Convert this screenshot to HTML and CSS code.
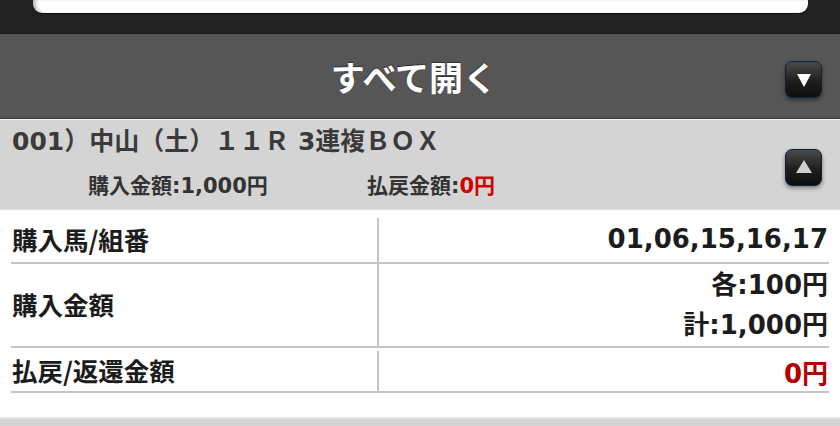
FILE: index.html
```html
<!DOCTYPE html>
<html lang="ja">
<head>
<meta charset="utf-8">
<title>購入履歴</title>
<link rel="stylesheet" href="styles.css">
</head>
<body>
<div class="top">
  <div class="search"></div>
</div>
<div class="openall">
  <span class="spacer"></span>
  <span class="openall-label">すべて開く</span>
  <span class="tbtn tbtn-down"><span class="tri tri-down"></span></span>
</div>
<div class="entry-head">
  <div class="entry-info">
    <div class="entry-title">001）中山（土）１１Ｒ 3連複ＢＯＸ</div>
    <div class="entry-sub">
      <span>購入金額:1,000円</span>
      <span>払戻金額:<em class="red">0円</em></span>
    </div>
  </div>
  <span class="tbtn tbtn-up"><span class="tri tri-up"></span></span>
</div>
<div class="detail">
  <div class="row row-1">
    <div class="cell-label">購入馬/組番</div>
    <div class="cell-value">01,06,15,16,17</div>
  </div>
  <div class="row row-2">
    <div class="cell-label">購入金額</div>
    <div class="cell-value cell-multi"><span>各:100円</span><span>計:1,000円</span></div>
  </div>
  <div class="row row-3">
    <div class="cell-label">払戻/返還金額</div>
    <div class="cell-value dark-red">0円</div>
  </div>
</div>
<div class="entry-head next"></div>
</body>
</html>
```
FILE: styles.css
```css
* { box-sizing: border-box; }
html, body { margin: 0; padding: 0; }
body {
  width: 840px;
  height: 426px;
  overflow: hidden;
  background: #fff;
  font-family: "DejaVu Sans", "Noto Sans CJK JP", sans-serif;
  font-weight: bold;
}
.top {
  height: 33px;
  background: #222;
  padding: 0 32px 0 33px;
}
.search {
  height: 13px;
  background: #fff;
  border-radius: 0 0 9px 9px;
  box-shadow: inset 4px 0 4px -2px rgba(0,0,0,0.35), 0 1px 0 #0c0c0c;
}
.openall {
  height: 86px;
  background: #565656;
  border-top: 1px solid #1c1c1c;
  border-bottom: 1px solid #3a3a3a;
  display: grid;
  grid-template-columns: 1fr auto 1fr;
  align-items: center;
  padding: 0 18px 0 0;
}
.openall-label {
  font-family: "Noto Sans CJK JP", sans-serif;
  font-size: 34px;
  color: #fff;
  line-height: 40px;
  text-shadow: 0 -1px 1px rgba(0,0,0,0.45);
  padding-top: 2px;
  padding-left: 6px;
}
.tbtn {
  width: 37px;
  height: 37px;
  border-radius: 7px;
  background: linear-gradient(#4a4a4a, #1e1e1e 55%, #0e0e0e);
  border: 1px solid #0f2238;
  box-shadow: 0 2px 4px rgba(0,0,0,0.45);
  display: flex;
  align-items: center;
  justify-content: center;
  justify-self: end;
}
.tbtn-down { margin-top: 6px; }
.tri { width: 0; height: 0; }
.tri-down {
  border-left: 7px solid transparent;
  border-right: 7px solid transparent;
  border-top: 13px solid #fff;
  margin-top: 2px;
}
.tri-up {
  border-left: 8px solid transparent;
  border-right: 8px solid transparent;
  border-bottom: 13px solid #cfcfcf;
  margin-top: -2px;
}
.entry-head {
  background: #d4d4d4;
  border-top: 1px solid #f2f2f2;
  border-bottom: 1px solid #dcdcdc;
  height: 91px;
  padding: 7px 18px 8px 12px;
  display: flex;
  align-items: center;
  justify-content: space-between;
}
.entry-info { align-self: flex-start; }
.entry-title {
  font-size: 25px;
  line-height: 30px;
  color: #3a3a3a;
  white-space: nowrap;
}
.entry-sub {
  margin-top: 14px;
  font-size: 21px;
  line-height: 30px;
  color: #333;
  padding-left: 76px;
  display: grid;
  grid-template-columns: 279px auto;
  white-space: nowrap;
}
.red { font-style: normal; color: #d40000; }
.tbtn-up { margin-top: 7px; }
.detail {
  padding: 8px 11px 24px 11px;
}
.row {
  display: grid;
  grid-template-columns: 368px 1fr;
  border-bottom: 2px solid #c4c4c4;
  font-size: 26px;
  color: #1c1c1c;
}
.cell-label {
  border-right: 2px solid #c4c4c4;
  padding-left: 1px;
  padding-bottom: 4px;
  display: flex;
  align-items: center;
  font-family: "Noto Sans CJK JP", sans-serif;
  font-size: 25.5px;
}
.cell-value {
  display: flex;
  align-items: center;
  justify-content: flex-end;
  padding-right: 1px;
}
.row-1 { height: 46px; }
.row-1 .cell-value { padding-bottom: 2px; }
.row-2 { height: 84px; }
.cell-multi {
  flex-direction: column;
  align-items: flex-end;
  justify-content: center;
  line-height: 40px;
}
.row-3 { height: 42px; margin-top: 3px; }
.dark-red { color: #b30000; }
.next {
  height: 9px;
  border-top: 2px solid #e6e6e6;
}
```
